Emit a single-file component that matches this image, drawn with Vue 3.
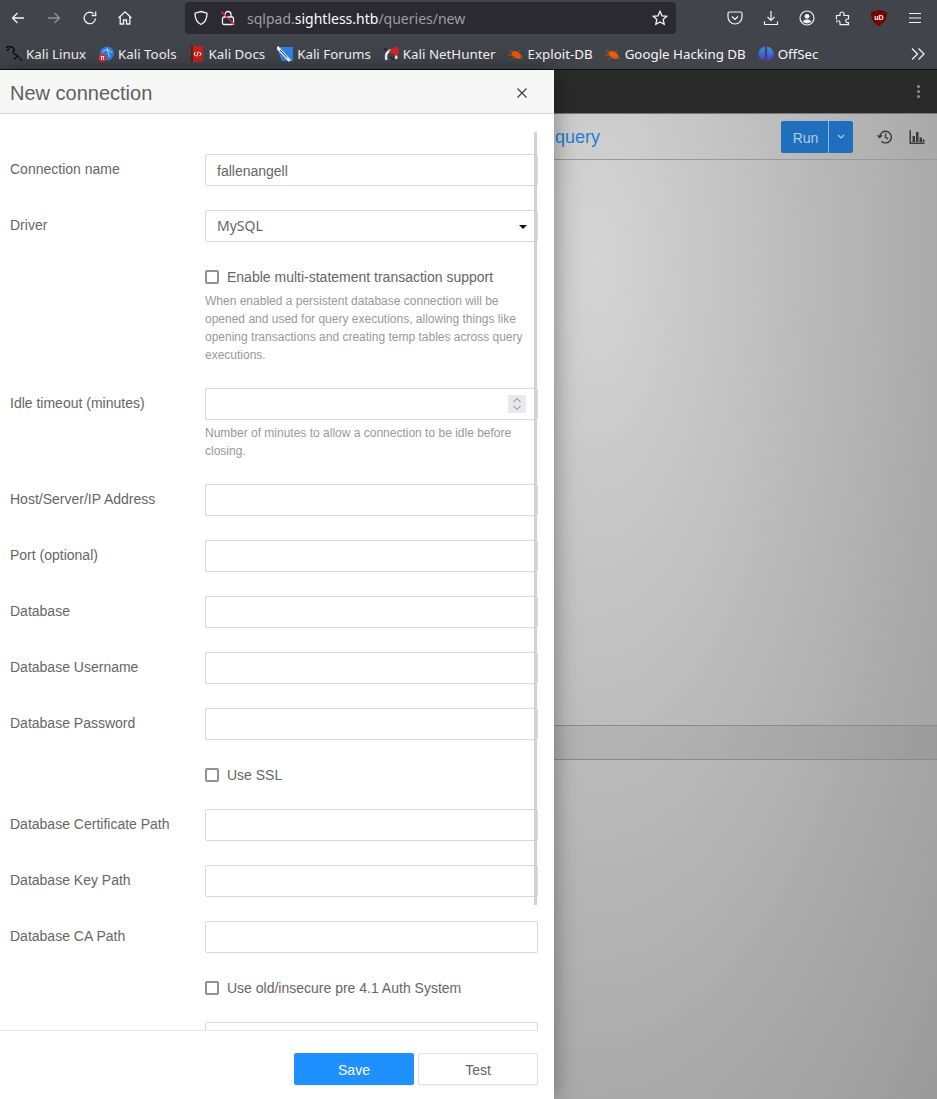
<script setup>
const bookmarks = [
  { name: 'Kali Linux', icon: 'dragon' },
  { name: 'Kali Tools', icon: 'tools' },
  { name: 'Kali Docs', icon: 'docs' },
  { name: 'Kali Forums', icon: 'forums' },
  { name: 'Kali NetHunter', icon: 'hunter' },
  { name: 'Exploit-DB', icon: 'bug' },
  { name: 'Google Hacking DB', icon: 'bug' },
  { name: 'OffSec', icon: 'offsec' }
]
const upper = [
  { label: 'Host/Server/IP Address' },
  { label: 'Port (optional)' },
  { label: 'Database' },
  { label: 'Database Username' },
  { label: 'Database Password' }
]
const lower = [
  { label: 'Database Certificate Path' },
  { label: 'Database Key Path' },
  { label: 'Database CA Path' }
]
</script>

<template>
  <div class="page">
    <header class="browser">
      <div class="navbar">
        <svg class="ic back" viewBox="0 0 16 16"><path d="M14 8H2.500M7.500 3 2.500 8l5 5" /></svg>
        <svg class="ic fwd" viewBox="0 0 16 16"><path d="M2 8h11.500M8.500 3l5 5-5 5" /></svg>
        <svg class="ic reload" viewBox="0 0 16 16"><path d="M13.500 8.500A5.700 5.700 0 1 1 11.500 3.600M13.700 1.500v4h-4" /></svg>
        <svg class="ic home" viewBox="0 0 16 16"><path d="M1.500 8 8 1.800 14.500 8M3.200 6.800V14h3.300v-4h3v4h3.300V6.800" /></svg>
        <div class="urlbar">
          <svg class="ic shield" viewBox="0 0 16 16"><path d="M8 1.500 14 3.200c0 5.500-1.800 9.200-6 11.300C3.800 12.400 2 8.700 2 3.200Z" /></svg>
          <svg class="ic lock" viewBox="0 0 16 16"><rect x="2.500" y="7" width="11" height="7.500" rx="1.500" /><path d="M5 7V4.500a3 3 0 0 1 6 0V7" /><path class="slash" d="M1 1.500 15 15" /></svg>
          <span class="url"><i>sqlpad.</i>sightless.htb<i>/queries/new</i></span>
          <svg class="ic star" viewBox="0 0 16 16"><path d="m8 1.300 2 4.500 4.800.5-3.600 3.200 1 4.800L8 11.900l-4.200 2.400 1-4.800L1.200 6.300 6 5.800Z" /></svg>
        </div>
        <div class="tools">
          <svg class="ic" viewBox="0 0 16 16"><path d="M2.500 2h11A1.500 1.500 0 0 1 15 3.500V7a7 7 0 0 1-14 0V3.500A1.500 1.500 0 0 1 2.500 2ZM5 6.500l3 3 3-3" /></svg>
          <svg class="ic" viewBox="0 0 16 16"><path d="M8 1v9.500M4.500 7 8 10.500 11.500 7M1.500 11.500v3h13v-3" /></svg>
          <svg class="ic" viewBox="0 0 16 16"><circle cx="8" cy="8" r="7" /><circle class="solid" cx="8" cy="6.300" r="2.400" /><path class="solid" d="M3.700 11.500c1-1.500 2.500-2 4.300-2s3.300.5 4.300 2c-1 1.100-2.600 1.800-4.300 1.800s-3.300-.7-4.300-1.800Z" /></svg>
          <svg class="ic" viewBox="0 0 16 16"><path d="M1.500 9.500V5.500h3.500V4a2 2 0 0 1 4 0v1.500h4.500v3.500h-1a1.800 1.800 0 0 0 0 3.600h1v2h-8.500v-2.100a1.700 1.700 0 0 0-3.500 0" /></svg>
          <svg class="ublock" viewBox="0 0 16 16"><path d="M8 .5 15.500 2.500c0 6.500-2.500 10.500-7.500 13C3 13 .5 9 .5 2.500Z" /><text x="8" y="9.500" text-anchor="middle">uD</text></svg>
          <svg class="ic" viewBox="0 0 16 16"><path d="M2 3.500h12M2 8h12M2 12.500h12" /></svg>
        </div>
      </div>
      <div class="bookmarks">
        <span v-for="b in bookmarks" :key="b.name" class="bm">
          <svg class="fav" viewBox="0 0 16 16">
            <template v-if="b.icon === 'dragon'"><path class="dragon" d="M0 1.500C3 0 6 .5 8 2.500 9.500 4.500 6 5.500 7.500 7.500 9.500 9 13 9 15.500 15M3 2.500 1 5M11 10.500l-3 3" /></template>
            <template v-else-if="b.icon === 'tools'"><circle cx="9" cy="7.500" r="7" fill="#2f7fe0" /><path d="M4.500 6c3-3 6-3 9.500 1M9 2l2.500 9" stroke="#cfe4ff" fill="none" stroke-width=".8" /><circle cx="4.500" cy="12" r="4" fill="#d9302c" /><path d="M2.800 10.500h3.400M3.500 10.500V14M5.500 10.500V14" stroke="#fff" fill="none" stroke-width=".9" /></template>
            <template v-else-if="b.icon === 'docs'"><rect x="2" y="0" width="12" height="16" rx="1" fill="#c8201e" /><rect x="2" y="0" width="2" height="16" fill="#6d1816" /><path d="M6.500 6 5 8l1.500 2M10.500 6 12 8l-1.500 2M9.300 5.500 7.700 10.500" stroke="#fff" fill="none" /></template>
            <template v-else-if="b.icon === 'forums'"><path d="M3 1h13v14H5L1 5Z" fill="#2b86e6" /><path d="M0 1l13 14" stroke="#f2f2f2" stroke-width="3" /><path d="M3 4l7 7.500" stroke="#222" stroke-width="1" /></template>
            <template v-else-if="b.icon === 'hunter'"><path d="M3.500 14C1.500 7 6 3.500 10 5c3 1 4 4.500 3 8" stroke="#f0f0f0" stroke-width="2.500" fill="none" /><path d="M6 5 13 0l3 4-1 6-4-1a4 4 0 0 0-4-2Z" fill="#d3232a" /><path d="M1 2l3 3M7.500 11l3 3" stroke="#222" stroke-width="1.500" /></template>
            <template v-else-if="b.icon === 'bug'"><ellipse cx="8.500" cy="9" rx="5.500" ry="3.200" transform="rotate(30 8.500 9)" fill="#ea5a10" /><path d="M1 4l5 3M3 14l4-4M12 4 10 7M15 13l-3-2M0 9h4" stroke="#b5520f" fill="none" /></template>
            <template v-else><defs><linearGradient id="offsec" x1="0" y1="0" x2="0" y2="1"><stop offset="0" stop-color="#1fa8d8" /><stop offset="1" stop-color="#5a34c4" /></linearGradient></defs><path d="M6.800 .5C3 1.500 .5 4.500 .5 8s2 6 6.300 6.500Z" fill="url(#offsec)" /><path d="M9.200 .5c3.800 1 6.300 4 6.300 7.500s-2 6-6.300 6.500Z" fill="url(#offsec)" /><path d="M8 1v15" stroke="#5a34c4" stroke-width=".8" /></template>
          </svg>{{ b.name }}
        </span>
        <svg class="ic more" viewBox="0 0 16 16"><path d="M2 2.500 7.500 8 2 13.500M8.500 2.500 14 8l-5.500 5.500" /></svg>
      </div>
    </header>

    <div class="app">
      <div class="appbar">
        <span class="dots"><b></b><b></b><b></b></span>
      </div>
      <div class="toolbar">
        <span class="query">New query</span>
        <span class="run"><span class="run-l">Run</span><span class="run-r"><svg viewBox="0 0 8 5"><path d="M1 1l3 3 3-3" /></svg></span></span>
        <svg class="hist" viewBox="0 0 16 16"><path d="M2.700 8a5.800 5.800 0 1 1 1.700 4.200M.5 6.200 2.700 8.500 5 6.200" /><path d="M8.500 4.500V8.300l2.700 1.600" /></svg>
        <svg class="chart" viewBox="0 0 16 16"><path d="M.5 1v14h15v-1.500H2V1ZM3.500 7H6v6H3.500ZM7 3h2.500v10H7ZM10.500 8.500H13V13h-2.500ZM13.700 10.500h1.800V13h-1.800Z" /></svg>
      </div>
      <div class="editor"></div>
      <div class="band"></div>
      <div class="results"></div>

      <aside class="drawer">
        <div class="drawer-head">
          <span class="title">New connection</span>
          <svg class="close" viewBox="0 0 12 12"><path d="M1.500 1.500l9 9M10.500 1.500l-9 9" /></svg>
        </div>
        <div class="drawer-body">
          <div class="form">
            <div class="row"><label>Connection name</label><div class="field"><div class="input txt">fallenangell</div></div></div>
            <div class="row"><label>Driver</label><div class="field"><div class="input txt sel">MySQL<span class="caret"></span></div></div></div>
            <div class="row check-row">
              <label></label>
              <div class="field">
                <div class="check"><span class="box"></span>Enable multi-statement transaction support</div>
                <p class="help h1">When enabled a persistent database connection will be opened and used for query executions, allowing things like opening transactions and creating temp tables across query executions.</p>
              </div>
            </div>
            <div class="row">
              <label>Idle timeout (minutes)</label>
              <div class="field">
                <div class="input num"><span class="spin"><svg viewBox="0 0 18 18"><path d="M5.500 7 9 3.500 12.500 7M5.500 11 9 14.500 12.500 11" /></svg></span></div>
                <p class="help">Number of minutes to allow a connection to be idle before closing.</p>
              </div>
            </div>
            <div v-for="f in upper" :key="f.label" class="row"><label>{{ f.label }}</label><div class="field"><div class="input"></div></div></div>
            <div class="row"><label></label><div class="field"><div class="check"><span class="box"></span>Use SSL</div></div></div>
            <div v-for="f in lower" :key="f.label" class="row"><label>{{ f.label }}</label><div class="field"><div class="input"></div></div></div>
            <div class="row"><label></label><div class="field"><div class="check"><span class="box"></span>Use old/insecure pre 4.1 Auth System</div></div></div>
            <div class="row"><label></label><div class="field"><div class="input"></div></div></div>
          </div>
          <div class="scrollbar"></div>
        </div>
        <div class="drawer-foot">
          <button class="btn primary">Save</button>
          <button class="btn">Test</button>
        </div>
      </aside>
    </div>
  </div>
</template>

<style scoped>
.page { width: 937px; height: 1099px; overflow: hidden; display: flex; flex-direction: column; font-family: "Liberation Sans", Arial, sans-serif; }
.browser { height: 70px; background: #42444c; box-sizing: border-box; border-bottom: 1px solid #0c0c0d; flex: none; }
.navbar { height: 36px; display: flex; align-items: center; position: relative; }
.ic { width: 16px; height: 16px; fill: none; stroke: #f2f2f3; stroke-width: 1.300; flex: none; }
.back { margin-left: 10px; }
.fwd { margin-left: 20px; opacity: .45; }
.reload { margin-left: 20px; }
.home { margin-left: 19px; }
.urlbar { margin-left: 52px; width: 491px; height: 32px; background: #2b2a33; border-radius: 4px; display: flex; align-items: center; box-sizing: border-box; padding: 0 8px; }
.lock { margin-left: 11px; }
.slash { stroke: #e22850; }
.url { margin-left: 11px; font: 14px "Noto Sans", sans-serif; color: #fbfbfe; flex: 1; white-space: nowrap; }
.url i { font-style: normal; color: #9d9da3; }
.tools { display: flex; align-items: center; gap: 20px; margin-left: 51px; }
.tools .ic { stroke-width: 1.200; }
.solid { fill: #f2f2f3; stroke: none; }
.ublock { width: 16px; height: 16px; flex: none; }
.ublock path { fill: #800000; stroke: #6a0000; }
.ublock text { font: bold 7px "Liberation Sans", sans-serif; fill: #fff; }
.bookmarks { height: 33px; box-sizing: border-box; padding: 3px 0 0 6px; display: flex; align-items: center; font: 13.330px "Noto Sans", sans-serif; color: #f5f5f6; position: relative; }
.bm { display: flex; align-items: center; gap: 4px; margin-right: 12px; white-space: nowrap; }
.fav { width: 16px; height: 16px; flex: none; }
.dragon { fill: none; stroke: #0d0d0d; stroke-width: 1.400; }
.more { margin-left: auto; margin-right: 11px; }
.app { flex: 1; position: relative; display: flex; flex-direction: column; background: radial-gradient(ellipse 481px 1188px at 597px 190px, #d4d4d4 0%, #aaaaaa 70.700%, #9a9a9a 100%); }
.appbar { height: 44px; flex: none; background: #2a2a2a; display: flex; justify-content: flex-end; align-items: center; padding-right: 17px; box-sizing: border-box; border-bottom: 1px solid #777; }
.dots { display: flex; flex-direction: column; gap: 2px; }
.dots b { width: 3px; height: 3px; border-radius: 50%; background: #8e8e8e; }
.toolbar { height: 46px; flex: none; box-sizing: border-box; border-bottom: 1px solid #999; display: flex; align-items: center; }
.query { width: 600px; text-align: right; font-size: 18px; color: #1f7fd2; flex: none; margin-top: 2px; }
.run { margin-left: 181px; width: 72px; height: 32px; background: #1e6fbe; border-radius: 2px; display: flex; color: #b4cbe4; font-size: 14px; flex: none; }
.run-l { width: 48px; box-sizing: border-box; padding-left: 2px; line-height: 34px; text-align: center; border-right: 1px solid #8fb2d6; }
.run-r { flex: 1; display: flex; align-items: center; justify-content: center; }
.run-r svg { width: 8px; height: 5px; fill: none; stroke: #b9cfe6; stroke-width: 1.100; }
.hist, .chart { width: 16px; height: 16px; flex: none; }
.hist { margin-left: 24px; fill: none; stroke: #3a3a3a; stroke-width: 1.400; }
.chart { margin-left: 16px; fill: #3a3a3a; }
.editor { height: 566px; flex: none; border-bottom: 1px solid #8a8a8a; box-sizing: border-box; }
.band { height: 34px; flex: none; box-sizing: border-box; background: rgba(0, 0, 0, .05); border-bottom: 1px solid #8a8a8a; }
.results { flex: 1; }
.drawer { position: absolute; left: 0; top: 0; bottom: 0; width: 554px; background: #fff; display: flex; flex-direction: column; box-shadow: 0 0 22px rgba(0, 0, 0, .38); }
.drawer-head { height: 44px; flex: none; box-sizing: border-box; background: #f7f7f7; border-bottom: 1px solid #d4d4d4; display: flex; align-items: center; justify-content: space-between; padding: 4px 26px 0 10px; }
.title { font-size: 20px; color: #606060; }
.close { width: 12px; height: 12px; margin-top: -2px; fill: none; stroke: #444; stroke-width: 1.300; }
.drawer-body { flex: 1; position: relative; overflow: hidden; box-sizing: border-box; padding: 40px 16px 0 10px; }
.row { display: flex; margin-bottom: 24px; }
.row label { width: 195px; flex: none; font-size: 14px; line-height: 30px; color: #666; }
.field { flex: 1; min-width: 0; }
.input { height: 32px; box-sizing: border-box; border: 1px solid #d9d9d9; border-radius: 2px; background: #fff; position: relative; }
.txt { font-size: 14px; line-height: 32px; color: #666; padding-left: 11px; }
.sel { font: 14px/30px "Noto Sans", sans-serif; }
.caret { position: absolute; right: 10px; top: 14px; width: 0; height: 0; border: 4.500px solid transparent; border-top: 4.500px solid #111; border-bottom: 0; }
.spin { position: absolute; right: 11px; top: 6px; width: 18px; height: 18px; background: #e9e9ed; display: flex; align-items: center; }
.spin svg { width: 18px; height: 18px; fill: none; stroke: #777; stroke-width: 1; }
.check { display: flex; align-items: center; height: 21px; font-size: 14px; color: #666; }
.box { width: 14px; height: 14px; box-sizing: border-box; border: 2px solid #8f8f9d; border-radius: 2px; margin: 1px 8px 0 0; flex: none; }
.help { margin: 4px 0 0; font-size: 12px; line-height: 18px; color: #999; }
.h1 { margin-bottom: 1px; padding-top: 1px; margin-top: 4px; margin-bottom: 0; }
.scrollbar { position: absolute; left: 534px; top: 18px; width: 3px; height: 773px; background: #d2d2d2; }
.drawer-foot { height: 69px; flex: none; margin-right: 16px; box-sizing: border-box; border-top: 1px solid #e6e6e6; display: flex; justify-content: flex-end; gap: 4px; padding-top: 22px; }
.btn { width: 120px; height: 32px; box-sizing: border-box; border: 1px solid #e0e0e0; border-radius: 2px; background: #fff; font: 14px "Liberation Sans", sans-serif; color: #666; padding: 1px 0 0; box-shadow: 0 1px 2px rgba(0, 0, 0, .06); }
.primary { background: #1e90ff; border-color: #1e90ff; color: #fff; }
</style>
